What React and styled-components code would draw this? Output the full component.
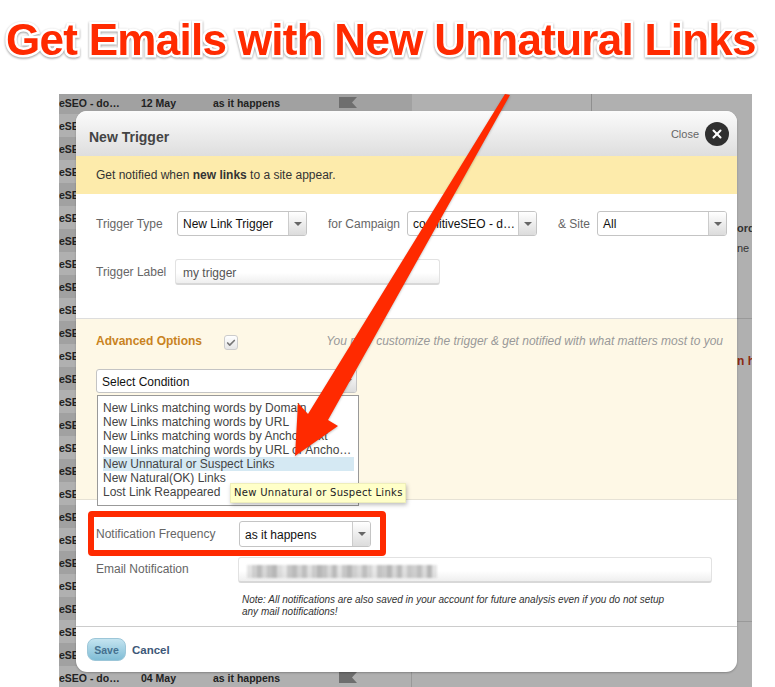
import React from 'react';
import styled, { createGlobalStyle } from 'styled-components';
import { X, Check } from 'lucide-react';

const conditions = [
  'New Links matching words by Domain',
  'New Links matching words by URL',
  'New Links matching words by Anchor Text',
  'New Links matching words by URL or Anchor Text',
  'New Unnatural or Suspect Links',
  'New Natural(OK) Links',
  'Lost Link Reappeared',
];

const mosaic = [
  .35, .6, .85, .5, .75, .9, .45, .3, .7, .85, .55, .8, .4, .65, .9, .75, .5, .85, .35, .7,
  .9, .6, .45, .8, .55, .3, .75, .65, .9, .5, .85, .4, .7, .6, .8, .45, .9, .35,
];

const rowDates = Array.from({ length: 26 }, (_, i) => (i === 25 ? '04 May' : '12 May'));

const Global = createGlobalStyle`
  html, body { margin: 0; padding: 0; background: #fff; }
  body { font-family: "Liberation Sans", Arial, sans-serif; width: 775px; height: 687px; overflow: hidden; }
`;

const Page = styled.div`
  position: relative;
  width: 775px;
  height: 687px;
  overflow: hidden;
`;

const Headline = styled.h1`
  margin: 0;
  height: 94px;
  padding: 15px 0 0 6px;
  box-sizing: border-box;
  font-size: 44px;
  letter-spacing: -0.72px;
  line-height: 50px;
  font-weight: 700;
  white-space: nowrap;
  color: #ff2a00;
  -webkit-text-stroke: 5px #fff;
  paint-order: stroke fill;
  filter: drop-shadow(0 1.5px 1px rgba(0, 0, 0, .4));
`;

const Stage = styled.div`
  position: relative;
  display: flex;
  width: 693px;
  height: 593px;
  margin-left: 59px;
  overflow: hidden;
  background: #b0b0b0;
`;

const Table = styled.div`
  width: 353px;
  margin-top: -3px;
  flex-shrink: 0;
`;

const TableRow = styled.div`
  display: grid;
  grid-template-columns: 82px 72px 126px 40px;
  align-items: center;
  height: 23px;
  box-sizing: border-box;
  background: ${p => (p.$dark ? '#a1a1a1' : '#b0b0b0')};
  border-right: 1px solid ${p => (p.$dark ? '#a1a1a1' : '#999')};
  font-size: 10.5px;
  font-weight: 700;
  color: #222;
  white-space: nowrap;
`;

const Flag = styled.svg`
  width: 18px;
  height: 11px;
`;

const Middle = styled.div`
  flex: 1;
`;

const MiddleTick = styled.div`
  width: 179px;
  height: 18px;
  border-right: 1px solid #8f8f8f;
`;

const Strip = styled.div`
  width: 15px;
  overflow: hidden;
  flex-shrink: 0;
  white-space: nowrap;
  font-size: 11px;
  color: #333;
  padding-top: 127px;
`;

const StripText = styled.div`
  height: 20px;
  line-height: 14px;
  font-weight: ${p => (p.$bold ? 700 : 400)};
`;

const StripRule = styled.div`
  height: 1px;
  background: #999;
  margin-top: ${p => p.$top}px;
`;

const StripAlert = styled.div`
  margin-top: 35px;
  font-size: 12px;
  font-weight: 700;
  line-height: 14px;
  color: #8c2a10;
`;

const Modal = styled.div`
  position: absolute;
  left: 17px;
  top: 17px;
  width: 661px;
  height: 561px;
  background: #fff;
  border-radius: 11px;
  overflow: hidden;
  box-shadow: 0 1px 2px rgba(0, 0, 0, .25);
`;

const ModalHead = styled.div`
  display: flex;
  align-items: center;
  justify-content: space-between;
  height: 45px;
  box-sizing: border-box;
  padding: 7px 8px 0 13px;
  background: linear-gradient(#fbfbfb, #dedede);
`;

const ModalTitle = styled.div`
  font-size: 14px;
  font-weight: 700;
  color: #444;
`;

const CloseBox = styled.div`
  display: flex;
  align-items: center;
  gap: 6px;
  margin-top: -7px;
  font-size: 11px;
  color: #666;
`;

const CloseBtn = styled.div`
  display: flex;
  align-items: center;
  justify-content: center;
  width: 24px;
  height: 24px;
  border-radius: 50%;
  background: #2f2f2f;
  color: #fff;
`;

const Banner = styled.div`
  height: 38px;
  line-height: 38px;
  padding-left: 20px;
  background: #fdebab;
  font-size: 12px;
  color: #333;
`;

const TopSection = styled.div`
  height: 125px;
  box-sizing: border-box;
  padding: 17px 0 0 20px;
  border-bottom: 1px solid #ddd;
`;

const FieldRow = styled.div`
  display: flex;
  align-items: center;
  margin-top: ${p => p.$top || 0}px;
`;

const Label = styled.div`
  width: ${p => p.$w}px;
  margin-left: ${p => p.$left || 0}px;
  flex-shrink: 0;
  font-size: 12px;
  color: #666;
  white-space: nowrap;
`;

const SelectBox = styled.div`
  display: flex;
  width: ${p => p.$w}px;
  height: ${p => p.$h || 25}px;
  flex-shrink: 0;
  box-sizing: border-box;
  background: #fff;
  border: 1px solid #c4c4c4;
  border-radius: 3px;
  font-size: 12px;
  color: #111;
`;

const SelectValue = styled.div`
  flex: 1;
  min-width: 0;
  line-height: ${p => p.$h || 25}px;
  padding-left: 5px;
  white-space: nowrap;
`;

const Caret = styled.div`
  display: flex;
  align-items: center;
  justify-content: center;
  width: 17px;
  border-left: 1px solid #ccc;
  border-radius: 0 2px 2px 0;
  background: linear-gradient(#fff, #dcdcdc);
  &::after {
    content: '';
    border: 4px solid transparent;
    border-top: 4px solid #666;
    border-bottom: 0;
  }
`;

const TextInput = styled.div`
  width: ${p => p.$w}px;
  height: 26px;
  flex-shrink: 0;
  box-sizing: border-box;
  padding-left: 7px;
  line-height: 26px;
  border: 1px solid #e2e2e2;
  border-bottom: 2px solid #d8d8d8;
  border-radius: 3px;
  background: linear-gradient(#fff 55%, #efefef);
  font-size: 12px;
  color: #555;
`;

const Advanced = styled.div`
  position: relative;
  height: 181px;
  box-sizing: border-box;
  padding: 13px 14px 0 20px;
  background: #fef8e6;
  border-bottom: 1px solid #e6e2d6;
`;

const AdvancedTitle = styled.div`
  width: 128px;
  flex-shrink: 0;
  font-size: 12px;
  font-weight: 700;
  color: #c9831f;
`;

const CheckBox = styled.div`
  display: flex;
  align-items: center;
  justify-content: center;
  width: 14px;
  height: 15px;
  margin-top: 3px;
  box-sizing: border-box;
  background: linear-gradient(#fff, #e6e6e6);
  border: 1px solid #ccc;
  border-radius: 3px;
  color: #777;
`;

const Hint = styled.div`
  margin-left: auto;
  font-size: 12px;
  font-style: italic;
  color: #999;
  white-space: nowrap;
`;

const ConditionList = styled.div`
  position: absolute;
  left: 21px;
  top: 76px;
  width: 262px;
  height: 111px;
  box-sizing: border-box;
  padding: 5px 4px 0 5px;
  background: #fff;
  border: 1px solid #999;
  z-index: 2;
`;

const ConditionItem = styled.div`
  height: 14px;
  line-height: 14px;
  font-size: 12px;
  color: #444;
  white-space: nowrap;
  overflow: hidden;
  text-overflow: ellipsis;
  background: ${p => (p.$active ? '#d5e9f3' : 'transparent')};
`;

const Tooltip = styled.div`
  position: absolute;
  left: 154px;
  top: 164px;
  height: 18px;
  line-height: 18px;
  padding: 0 2px 0 3px;
  background: #ffffc8;
  border: 1px solid #eeeebb;
  box-shadow: 1px 2px 4px rgba(0, 0, 0, .25);
  font-family: "DejaVu Sans", sans-serif;
  font-size: 10px;
  letter-spacing: .3px;
  color: #222;
  white-space: nowrap;
  z-index: 3;
`;

const Lower = styled.div`
  height: 127px;
  box-sizing: border-box;
  padding-top: 11px;
  border-bottom: 1px solid #ccc;
`;

const FreqFrame = styled.div`
  display: flex;
  align-items: center;
  width: 298px;
  height: 45px;
  box-sizing: border-box;
  margin-left: 12px;
  padding-left: 2px;
  border: 6px solid #ff2a00;
  border-radius: 4px;
`;

const EmailRow = styled.div`
  display: flex;
  margin: 1px 0 0 20px;
`;

const EmailLabel = styled(Label)`
  line-height: 24px;
`;

const BlurredMail = styled.div`
  display: flex;
  width: 190px;
  height: 13px;
  margin: 7px 0 0 1px;
  filter: blur(1px);
`;

const MosaicCell = styled.span`
  flex: 1;
  background: rgba(175, 175, 175, ${p => p.$alpha});
`;

const Note = styled.div`
  margin: 11px 0 0 166px;
  font-size: 10px;
  line-height: 12px;
  font-style: italic;
  color: #333;
`;

const Footer = styled.div`
  display: flex;
  align-items: center;
  gap: 6px;
  padding: 11px 0 0 11px;
`;

const SaveBtn = styled.div`
  width: 39px;
  height: 23px;
  box-sizing: border-box;
  line-height: 22px;
  text-align: center;
  border-radius: 8px;
  border: 1px solid #9cc6d8;
  background: linear-gradient(#c4e4f0, #80bdd6);
  font-size: 10.5px;
  font-weight: 700;
  color: #44708f;
`;

const CancelLink = styled.div`
  font-size: 11.5px;
  font-weight: 700;
  color: #3d5878;
`;

const ArrowLayer = styled.svg`
  position: absolute;
  left: 0;
  top: 0;
  width: 775px;
  height: 687px;
  pointer-events: none;
  z-index: 5;
  filter: drop-shadow(0 1px 1px rgba(0, 0, 0, .25));
`;

const Select = ({ w, h, children }) => (
  <SelectBox $w={w} $h={h}>
    <SelectValue $h={h}>{children}</SelectValue>
    <Caret />
  </SelectBox>
);

const App = () => {
  return (
    <Page>
      <Global />
      <Headline>Get Emails with New Unnatural Links</Headline>
      <Stage>
        <Table>
          {rowDates.map((date, i) => (
            <TableRow key={i} $dark={i % 2 === 0}>
              <span>eSEO - do…</span>
              <span>{date}</span>
              <span>as it happens</span>
              <Flag viewBox="0 0 18 11">
                <path d="M0 0H18L13 5.5L18 11H0Z" fill="#6e6e6e" />
              </Flag>
            </TableRow>
          ))}
        </Table>
        <Middle>
          <MiddleTick />
        </Middle>
        <Strip>
          <StripText $bold>ord</StripText>
          <StripText>ne r</StripText>
          <StripRule $top={57} />
          <StripAlert>n h</StripAlert>
          <StripRule $top={253} />
        </Strip>
        <Modal>
          <ModalHead>
            <ModalTitle>New Trigger</ModalTitle>
            <CloseBox>
              Close
              <CloseBtn><X size={14} strokeWidth={3.5} /></CloseBtn>
            </CloseBox>
          </ModalHead>
          <Banner>Get notified when <b>new links</b> to a site appear.</Banner>
          <TopSection>
            <FieldRow>
              <Label $w={81}>Trigger Type</Label>
              <Select w={130}>New Link Trigger</Select>
              <Label $w={79} $left={21}>for Campaign</Label>
              <Select w={130}>cognitiveSEO - d…</Select>
              <Label $w={39} $left={21}>&amp; Site</Label>
              <Select w={130}>All</Select>
            </FieldRow>
            <FieldRow $top={23}>
              <Label $w={79}>Trigger Label</Label>
              <TextInput $w={265}>my trigger</TextInput>
            </FieldRow>
          </TopSection>
          <Advanced>
            <FieldRow>
              <AdvancedTitle>Advanced Options</AdvancedTitle>
              <CheckBox><Check size={10} strokeWidth={4} /></CheckBox>
              <Hint>You may customize the trigger &amp; get notified with what matters most to you</Hint>
            </FieldRow>
            <FieldRow $top={19}>
              <Select w={261} h={24}>Select Condition</Select>
            </FieldRow>
            <ConditionList>
              {conditions.map(c => (
                <ConditionItem key={c} $active={c === 'New Unnatural or Suspect Links'}>{c}</ConditionItem>
              ))}
            </ConditionList>
            <Tooltip>New Unnatural or Suspect Links</Tooltip>
          </Advanced>
          <Lower>
            <FreqFrame>
              <Label $w={143}>Notification Frequency</Label>
              <Select w={132} h={26}>as it happens</Select>
            </FreqFrame>
            <EmailRow>
              <EmailLabel $w={142}>Email Notification</EmailLabel>
              <TextInput $w={474}>
                <BlurredMail>
                  {mosaic.map((a, i) => <MosaicCell key={i} $alpha={a} />)}
                </BlurredMail>
              </TextInput>
            </EmailRow>
            <Note>
              Note: All notifications are also saved in your account for future analysis even if you do not setup<br />
              any mail notifications!
            </Note>
          </Lower>
          <Footer>
            <SaveBtn>Save</SaveBtn>
            <CancelLink>Cancel</CancelLink>
          </Footer>
        </Modal>
      </Stage>
      <ArrowLayer viewBox="0 0 775 687">
        <polygon
          points="505,94 510,95 328,420 338,426 295,456 298,403 308,414"
          fill="#ff2a00"
        />
      </ArrowLayer>
    </Page>
  );
};

export default App;
